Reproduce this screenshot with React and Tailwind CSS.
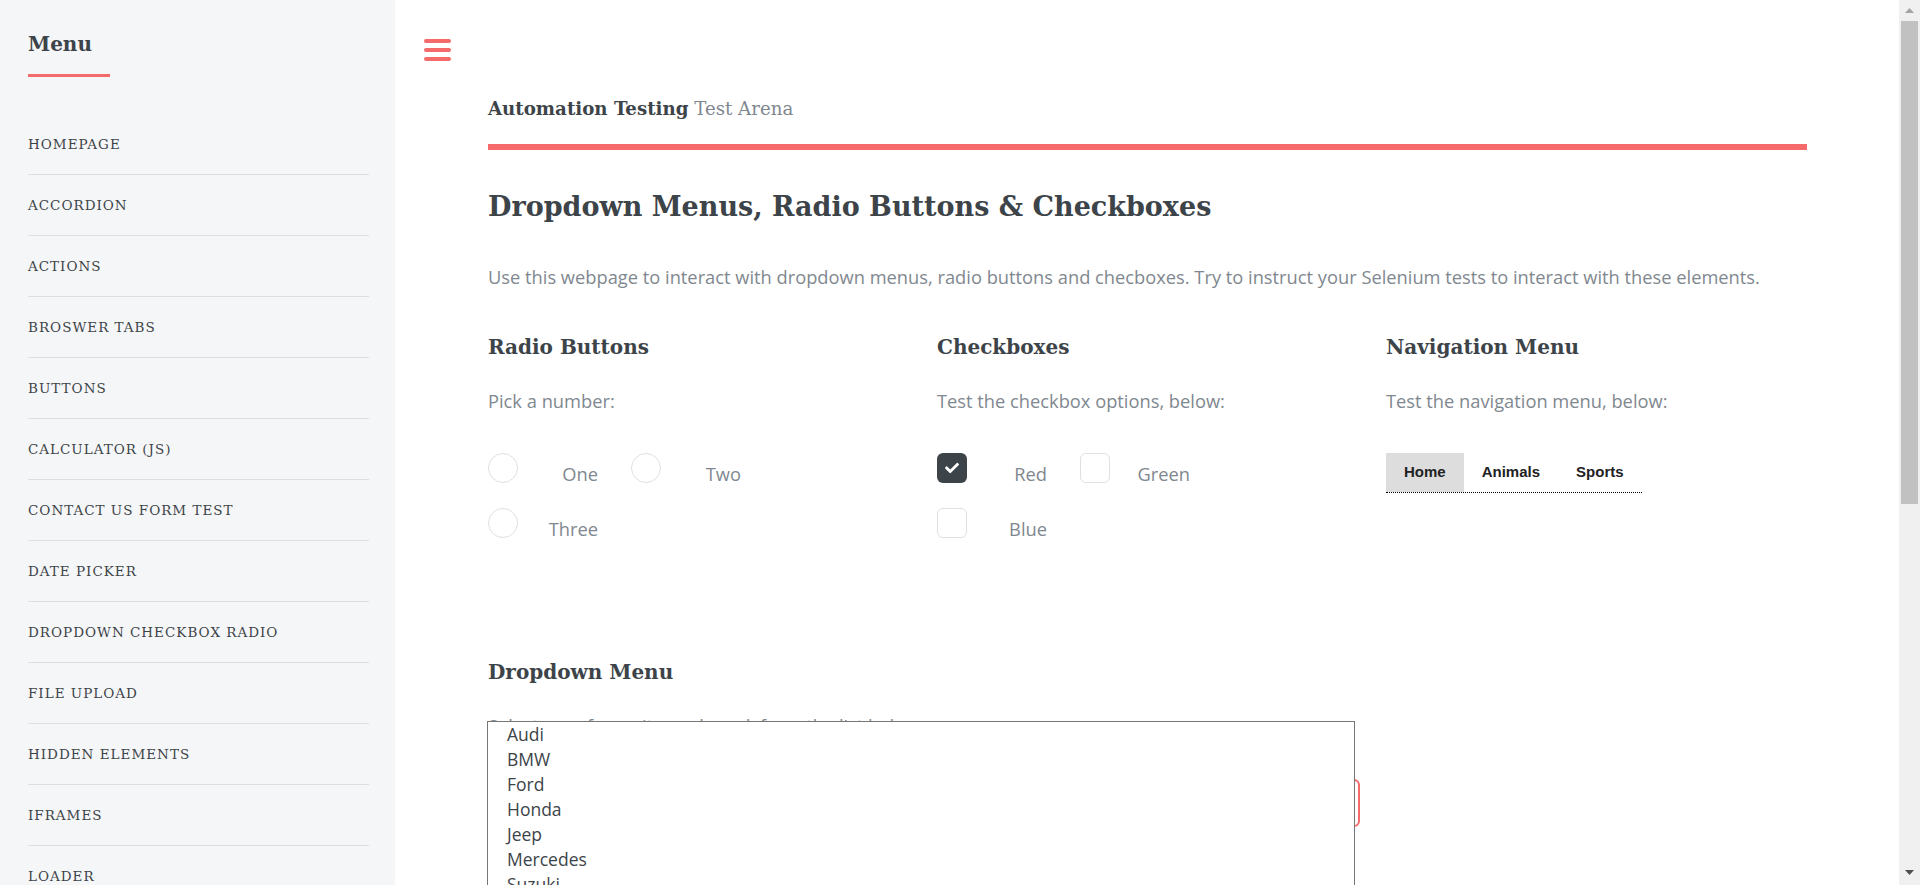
import React from "react";
import { FaCheck } from "react-icons/fa";

const menuItems = [
  "Homepage",
  "Accordion",
  "Actions",
  "Broswer Tabs",
  "Buttons",
  "Calculator (JS)",
  "Contact Us Form Test",
  "Date Picker",
  "Dropdown Checkbox Radio",
  "File Upload",
  "Hidden Elements",
  "IFrames",
  "Loader",
  "Login Portal Test",
];

const cars = ["Audi", "BMW", "Ford", "Honda", "Jeep", "Mercedes", "Suzuki", "Toyota", "Volvo"];

const Radio = ({ label }) => (
  <div className="flex items-start h-[30px]">
    <span className="w-[30px] h-[30px] rounded-full border border-[#dde1e2] bg-white" />
    <span className="w-[80px] mt-[7px] text-right leading-[28px]">{label}</span>
  </div>
);

const Checkbox = ({ label, checked }) => (
  <div className="flex items-start h-[30px]">
    {checked ? (
      <span className="w-[30px] h-[30px] rounded-[6px] bg-[#3d4449] flex items-center justify-center text-white">
        <FaCheck size={14} />
      </span>
    ) : (
      <span className="w-[30px] h-[30px] rounded-[6px] border border-[#dde1e2] bg-white" />
    )}
    <span className="w-[80px] mt-[7px] text-right leading-[28px]">{label}</span>
  </div>
);

const App = () => {
  return (
    <div className="flex h-screen w-full overflow-hidden bg-white font-['Open_Sans',sans-serif] text-[18.3px] text-[#7f888f]">
      {/* Sidebar */}
      <aside className="w-[395px] shrink-0 bg-[#f5f6f7] pl-[28px] pr-[26px] pt-[30px]">
        <h2 className="inline-block pr-[18px] pb-[16px] border-b-[3px] border-[#f56a6a] font-['DejaVu_Serif',serif] font-bold text-[20px] leading-[28px] text-[#3d4449]">
          Menu
        </h2>
        <ul className="mt-[37px]">
          {menuItems.map((item, i) => (
            <li
              key={item}
              className={
                i === 0
                  ? "h-[60px] flex items-center"
                  : "h-[61px] flex items-center border-t border-[#dcdee0]"
              }
            >
              <a className="font-['DejaVu_Serif',serif] uppercase text-[13.5px] tracking-[1px] text-[#3d4449]">
                {item}
              </a>
            </li>
          ))}
        </ul>
      </aside>

      {/* Main */}
      <main className="relative flex-1 pl-[93px] pr-[92px] pt-[92px]">
        <button className="absolute left-[29px] top-[39px] flex flex-col gap-[5px]" aria-label="Toggle">
          <span className="block w-[27px] h-[4px] rounded-[2px] bg-[#f56a6a]" />
          <span className="block w-[27px] h-[4px] rounded-[2px] bg-[#f56a6a]" />
          <span className="block w-[27px] h-[4px] rounded-[2px] bg-[#f56a6a]" />
        </button>

        <header className="pb-[18px] border-b-[6px] border-[#f56a6a]">
          <p className="font-['DejaVu_Serif',serif] text-[18.2px] leading-[34px] text-[#3d4449]">
            <strong className="font-bold">Automation Testing</strong>{" "}
            <span className="text-[#7f888f]">Test Arena</span>
          </p>
        </header>

        <h1 className="mt-[37px] font-['DejaVu_Serif',serif] font-bold text-[27px] leading-[40px] text-[#3d4449]">
          Dropdown Menus, Radio Buttons &amp; Checkboxes
        </h1>

        <p className="mt-[36px] leading-[28px]">
          Use this webpage to interact with dropdown menus, radio buttons and checboxes. Try to instruct your
          Selenium tests to interact with these elements.
        </p>

        <div className="mt-[40px] grid grid-cols-3 gap-x-[28px]">
          <section>
            <h3 className="font-['DejaVu_Serif',serif] font-bold text-[20px] leading-[32px] text-[#3d4449]">
              Radio Buttons
            </h3>
            <p className="mt-[24px] leading-[28px]">Pick a number:</p>
            <div className="mt-[38px] flex flex-col gap-[25px]">
              <div className="flex gap-[33px]">
                <Radio label="One" />
                <Radio label="Two" />
              </div>
              <Radio label="Three" />
            </div>
          </section>

          <section>
            <h3 className="font-['DejaVu_Serif',serif] font-bold text-[20px] leading-[32px] text-[#3d4449]">
              Checkboxes
            </h3>
            <p className="mt-[24px] leading-[28px]">Test the checkbox options, below:</p>
            <div className="mt-[38px] flex flex-col gap-[25px]">
              <div className="flex gap-[33px]">
                <Checkbox label="Red" checked />
                <Checkbox label="Green" />
              </div>
              <Checkbox label="Blue" />
            </div>
          </section>

          <section>
            <h3 className="font-['DejaVu_Serif',serif] font-bold text-[20px] leading-[32px] text-[#3d4449]">
              Navigation Menu
            </h3>
            <p className="mt-[24px] leading-[28px]">Test the navigation menu, below:</p>
            <nav className="mt-[38px] inline-flex border-b border-dotted border-black font-['Liberation_Sans',Arial,sans-serif] font-bold text-[15px] text-[#222]">
              <span className="h-[39px] px-[18px] flex items-center bg-[#dddddd]">Home</span>
              <span className="h-[39px] px-[18px] flex items-center">Animals</span>
              <span className="h-[39px] px-[18px] flex items-center">Sports</span>
            </nav>
          </section>
        </div>

        <h3 className="mt-[118px] font-['DejaVu_Serif',serif] font-bold text-[20px] leading-[32px] text-[#3d4449]">
          Dropdown Menu
        </h3>

        <div className="relative mt-[24px] w-[872px]">
          <p className="leading-[28px]">Select your favourite car brand, from the list below:</p>
          <div className="mt-[39px] h-[48px] rounded-[6px] border-2 border-[#f56a6a] bg-white" />

          {/* open listbox */}
          <ul className="absolute left-[-1px] top-[9px] w-[868px] border border-[#767676] bg-white text-[17.5px] leading-[25px] text-[#3d4449]">
            {cars.map((car) => (
              <li key={car} className="pl-[19px]">
                {car}
              </li>
            ))}
          </ul>
        </div>
      </main>

      {/* Scrollbar */}
      <div className="w-[21px] shrink-0 bg-[#f0f0f0] flex flex-col items-center">
        <svg width="9" height="5" viewBox="0 0 9 5" className="mt-[8px]">
          <path d="M0 5 L4.5 0 L9 5 Z" fill="#a3a3a3" />
        </svg>
        <div className="mt-[8px] w-[17px] h-[483px] bg-[#c1c1c1]" />
        <div className="flex-1" />
        <svg width="9" height="5" viewBox="0 0 9 5" className="mb-[10px]">
          <path d="M0 0 L9 0 L4.5 5 Z" fill="#505050" />
        </svg>
      </div>
    </div>
  );
};

export default App;
